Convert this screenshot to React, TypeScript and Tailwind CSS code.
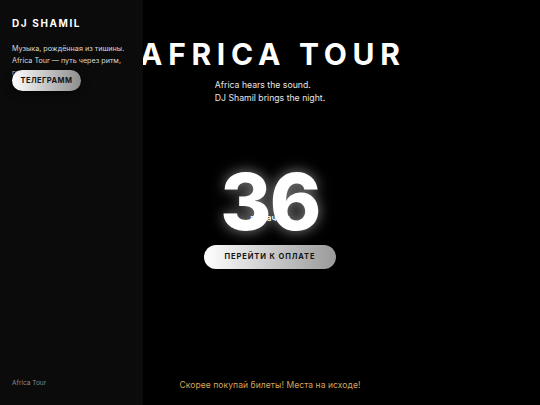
import React from "react";

const font = { fontFamily: 'Inter, "Open Sans", sans-serif' };

function Sidebar() {
  return (
    <aside className="absolute left-0 top-0 z-10 flex h-full w-[143px] flex-col bg-[#0b0b0b] px-3 pt-[16px] pb-[16px]">
      <div className="text-[10px] font-bold tracking-[0.16em] text-white">DJ SHAMIL</div>
      <p className="mt-[12px] whitespace-nowrap text-[7.2px] leading-[12px] text-[#d9d9d9]">
        Музыка, рождённая из тишины.
        <br />
        Africa Tour — путь через ритм,
        <br />
        голос и ночь.
      </p>
      <button className="relative -mt-[9px] h-[21px] w-[69px] rounded-full bg-gradient-to-r from-white to-[#8e8e8e] text-[7.5px] font-bold tracking-[0.06em] text-[#151515] shadow-[0_2px_8px_rgba(0,0,0,0.6)]">
        ТЕЛЕГРАММ
      </button>
      <div className="mt-auto text-[6.5px] text-[#8a8a8a]">Africa Tour</div>
    </aside>
  );
}

export default function App() {
  return (
    <div className="relative h-[405px] w-[540px] overflow-hidden bg-black" style={font}>
      <Sidebar />
      <main className="flex h-full flex-col items-center pt-[36px]">
        <h1 className="pl-[0.19em] text-[30px] font-bold leading-[36px] tracking-[0.19em] text-white">
          AFRICA TOUR
        </h1>
        <div className="mt-[7px] text-[8.7px] leading-[13px] text-[#e6e6e6]">
          <div>Africa hears the sound.</div>
          <div>DJ Shamil brings the night.</div>
        </div>
        <div className="relative mt-[62px] flex h-[70px] items-center justify-center">
          <span className="absolute top-[45px] text-[8px] font-semibold text-white">до начала</span>
          <span className="relative text-[78px] font-extrabold leading-none tracking-[-0.02em] text-white [text-shadow:0_0_14px_rgba(255,255,255,0.55)]">
            36
          </span>
        </div>
        <button className="mt-[8px] h-[24px] w-[132px] rounded-full bg-gradient-to-r from-white to-[#9a9a9a] text-[7.5px] font-bold tracking-[0.12em] text-[#151515] shadow-[0_2px_10px_rgba(0,0,0,0.6)]">
          ПЕРЕЙТИ К ОПЛАТЕ
        </button>
        <div className="mt-auto mb-[13px] text-[8.5px] tracking-[0.01em] text-[#d9a55a]">
          Скорее покупай билеты! Места на исходе!
        </div>
      </main>
    </div>
  );
}
